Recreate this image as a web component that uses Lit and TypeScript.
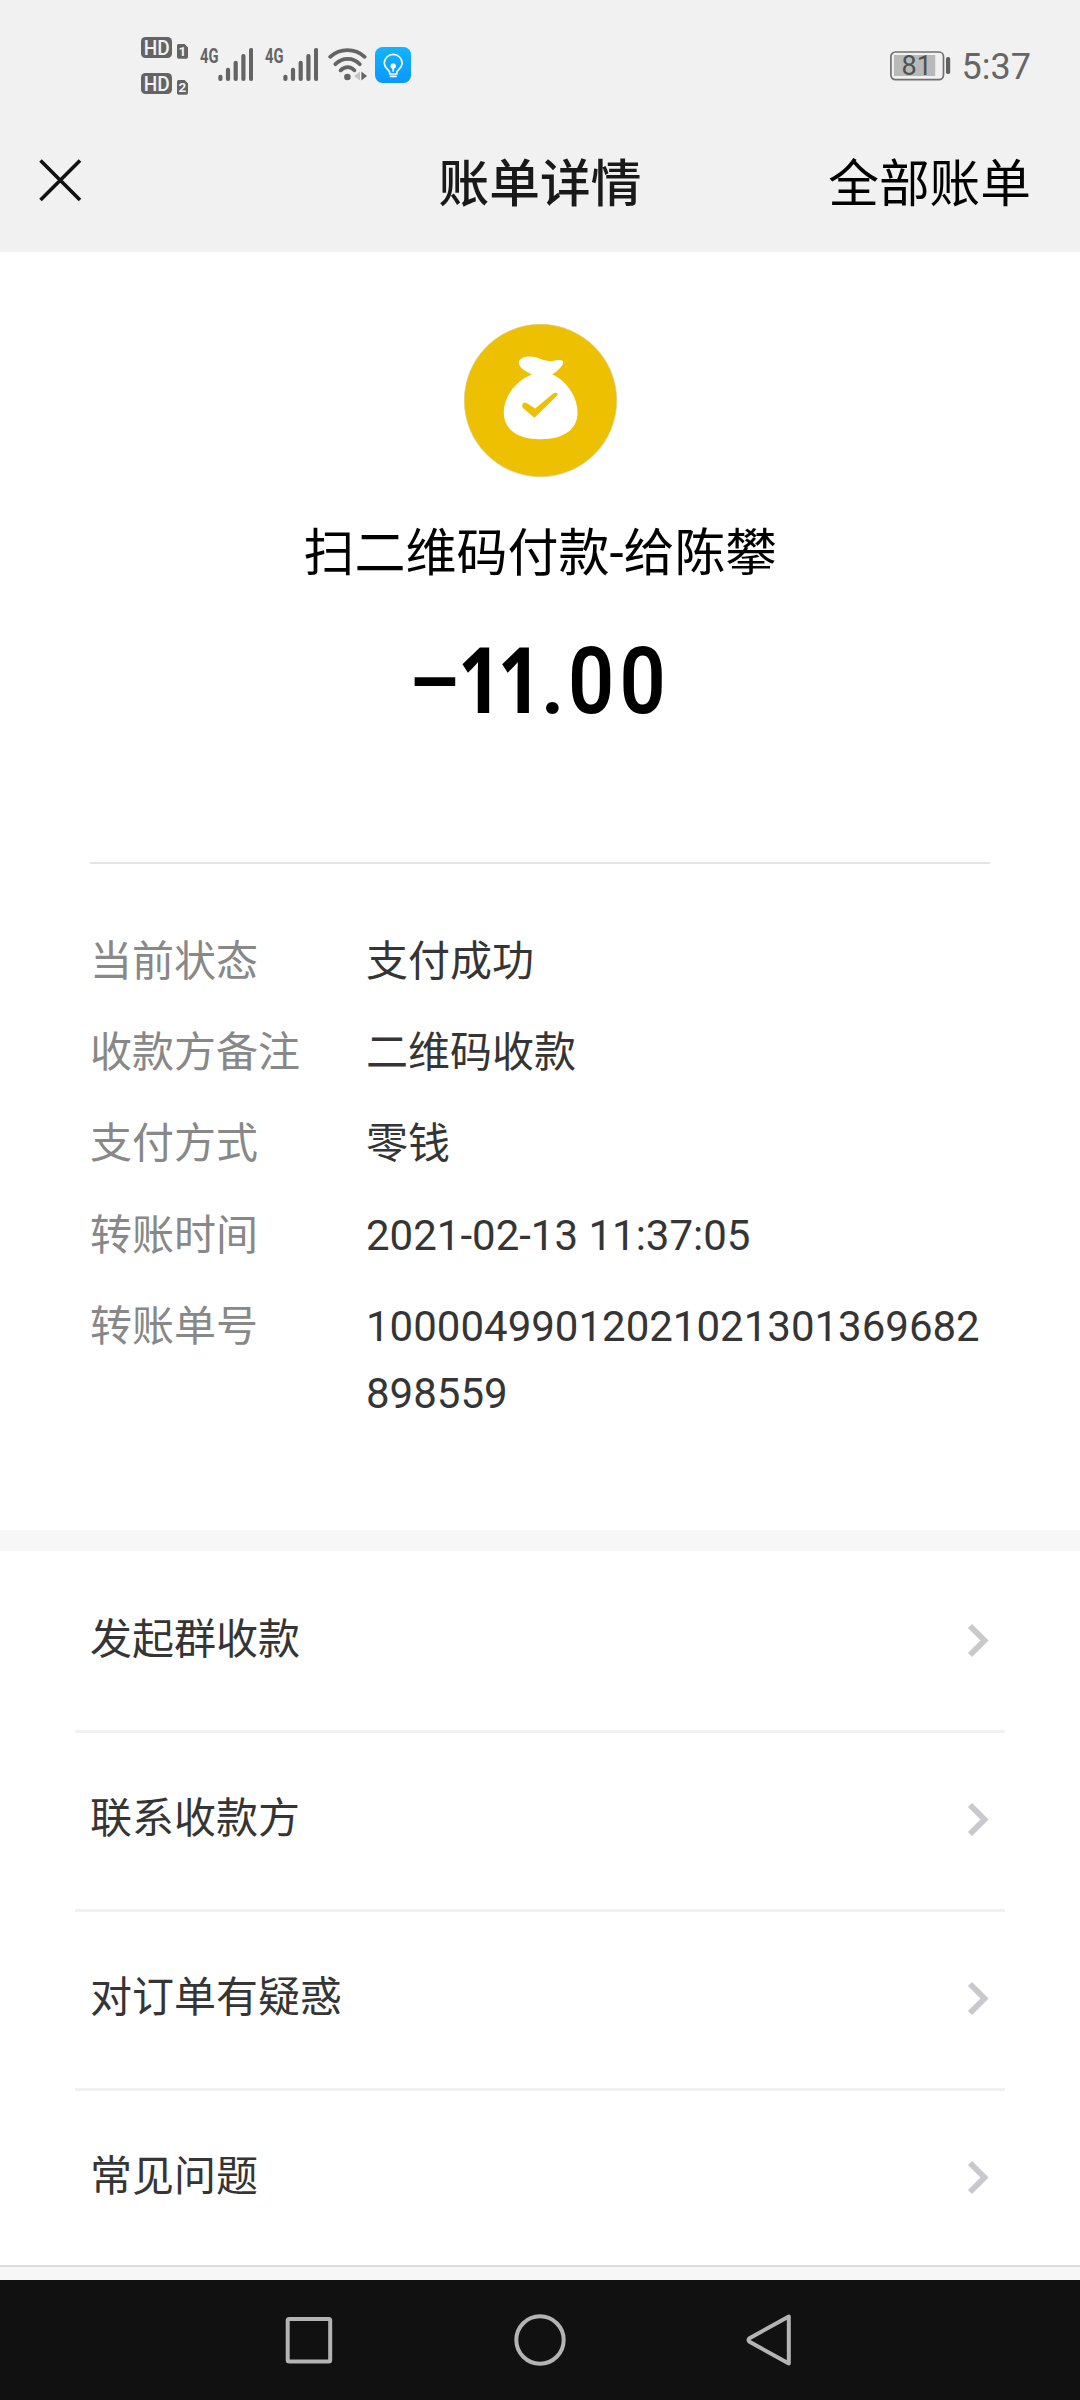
import { LitElement, html, css, svg } from "lit";
import { customElement, property } from "lit/decorators.js";

@customElement("status-bar")
class StatusBar extends LitElement {
  static styles = css`
    :host { display: flex; justify-content: space-between; align-items: flex-start; height: 110px; padding: 36px 49px 0 141px; box-sizing: border-box; }
    .left, .right { display: flex; align-items: flex-start; }
    .sims { display: flex; flex-direction: column; gap: 14px; margin-top: 1px; }
    svg { display: block; }
    text { font-family: Roboto, sans-serif; }
    .signal { margin-left: 12px; }
    .wifi { margin-left: 10px; }
    .bulb { margin-left: 7px; margin-top: 11px; }
    .battery { margin-top: 15px; }
    .time { margin-left: 11px; margin-top: 10px; font: 400 36px/42px Roboto, sans-serif; color: #666; }
  `;

  private sim(n: number) {
    return html`<svg width="47" height="22" viewBox="0 0 47 22">
      <rect x="0" y="0" width="31" height="21" rx="4.5" fill="#646464" />
      <text x="15.7" y="18" font-size="20.5" font-weight="500" text-anchor="middle" textLength="26" lengthAdjust="spacingAndGlyphs" fill="#f2f2f2">HD</text>
      <path d="M38 7h5.6l3.4 3.6V20a1.7 1.7 0 0 1-1.7 1.7h-7.6A1.7 1.7 0 0 1 36 20V8.7A1.7 1.7 0 0 1 38 7z" fill="#646464" />
      <text x="41.4" y="19.3" font-size="13.5" font-weight="700" text-anchor="middle" fill="#f2f2f2">${n}</text>
    </svg>`;
  }

  private signal() {
    const bars = [[18.3, 38.7], [25.9, 31.7], [33.6, 24.7], [41.3, 18], [49, 12]];
    return html`<svg class="signal" width="53" height="47" viewBox="0 0 53 47">
      <text x="0" y="27" font-size="21" font-weight="700" textLength="18.5" lengthAdjust="spacingAndGlyphs" fill="#646464">4G</text>
      ${bars.map(([x, y]) => svg`<rect x=${x} y=${y} width="4.2" height=${45 - y} rx="2" fill="#646464" />`)}
    </svg>`;
  }

  render() {
    return html`
      <div class="left">
        <div class="sims">${this.sim(1)}${this.sim(2)}</div>
        ${this.signal()}${this.signal()}
        <svg class="wifi" width="40" height="47" viewBox="0 0 40 47">
          <g fill="none" stroke="#646464" stroke-width="3.8" stroke-linecap="round">
            <path d="M2.2 20.800C12 11.800 27 11.800 36.600 20.800" />
            <path d="M7.4 28.200C14.500 21 25 21 31.800 28.200" />
            <path d="M12.6 34.300C17 30 22.500 30 26.400 34.300" />
          </g>
          <circle cx="19.4" cy="41" r="3.3" fill="#646464" />
          <path d="M32 35.500v9L26 40z" fill="#c4c4c4" />
          <path d="M33.400 35.500v9L39 40z" fill="#646464" />
        </svg>
        <svg class="bulb" width="36" height="36" viewBox="0 0 36 36">
          <defs><linearGradient id="sky" x1="0" y1="0" x2="0" y2="1"><stop offset="0" stop-color="#12b4ff" /><stop offset="1" stop-color="#0a98ff" /></linearGradient></defs>
          <rect width="36" height="36" rx="7.5" fill="url(#sky)" />
          <g fill="none" stroke="#fff" stroke-width="1.7" stroke-linejoin="round" stroke-linecap="round">
            <path d="M14.700 27V25.500C14.700 22.500 9.300 21.600 9.300 16.300a8.900 8.900 0 0 1 17.800 0C27.100 21.600 21.800 22.500 21.800 25.500V27z" />
            <path d="M18.200 18v6" /><path d="M15.500 29.300h5.500" />
          </g>
          <rect x="15.6" y="16.6" width="5.2" height="4.8" rx="1.6" fill="#fff" />
        </svg>
      </div>
      <div class="right">
        <svg class="battery" width="61" height="30" viewBox="0 0 61 30">
          <rect x=".9" y="1" width="52.6" height="27.6" rx="4.5" fill="none" stroke="#707070" stroke-width="1.7" />
          <rect x="3.9" y="4" width="41.3" height="21" fill="#b9b9b9" />
          <text x="26.7" y="24.3" font-size="27" text-anchor="middle" fill="#505050">81</text>
          <rect x="56" y="6" width="4.2" height="17" rx="1.8" fill="#606060" />
        </svg>
        <div class="time">5:37</div>
      </div>`;
  }
}

@customElement("title-bar")
class TitleBar extends LitElement {
  static styles = css`
    :host { display: grid; grid-template-columns: 1fr auto 1fr; align-items: center; height: 142px; padding: 0 49px 2px 39px; box-sizing: border-box; color: #000; }
    svg { display: block; }
    .title, .all { font: 400 50.7px/74px "Noto Sans CJK SC", sans-serif; margin-bottom: 1px; }
    .title { font-weight: 500; color: #191919; margin-left: 10px; }
    .all { justify-self: end; }
  `;
  render() {
    return html`
      <svg width="43" height="43" viewBox="0 0 43 43"><path d="M1.500 1.500L41 41M41 1.500L1.500 41" stroke="#111" stroke-width="3.600" fill="none" /></svg>
      <div class="title">账单详情</div>
      <div class="all">全部账单</div>`;
  }
}

@customElement("bill-summary")
class BillSummary extends LitElement {
  static styles = css`
    :host { display: flex; flex-direction: column; align-items: center; height: 610px; padding-top: 72px; box-sizing: border-box; color: #000; }
    svg { display: block; }
    .payee { margin-top: 39px; font: 400 51px/76px Roboto, "Noto Sans CJK SC", sans-serif; }
    .amount { display: grid; grid-template-columns: 48px 82px 28px 102px; align-items: baseline; height: 106px; margin-top: 33px; font: 500 92px/106px Roboto, sans-serif; }
    .amount span { display: block; white-space: nowrap; transform-origin: 0 50%; }
    .amount .sign { font-weight: 400; width: max-content; justify-self: end; transform-origin: 100% 50%; transform: translateY(-4px) scale(1.85, 1.3); }
    .ones { font-family: "Noto Sans", sans-serif; font-weight: 700; letter-spacing: -4px; transform: scaleX(0.82); }
    .zeros { font-weight: 600; letter-spacing: 6px; transform: scaleX(0.88); }
  `;
  render() {
    return html`
      <svg width="153" height="153" viewBox="72 72 458 458">
        <circle cx="301" cy="301" r="228" fill="#edc101" stroke="#d9c98a" stroke-width="2" />
        <path d="M276 223C255 213 236 202 236 187C238 170 265 166 285 171C308 178 320 187 345 181C360 178 371 181 369 188C366 201 350 214 336 223C375 239 412 286 412 337C412 388 370 417 302 417C230 417 191 386 191 337C191 286 232 238 276 223z" fill="#fff" />
        <path d="M252 308C246 310 244 318 249 324L283 353L350 287C356 279 348 275 340 279L285 325L262 310C258 307 255 307 252 308z" fill="#edc101" />
      </svg>
      <div class="payee">扫二维码付款-给陈攀</div>
      <div class="amount"><span class="sign">-</span><span class="ones">11</span><span class="dot">.</span><span class="zeros">00</span></div>`;
  }
}

@customElement("bill-details")
class BillDetails extends LitElement {
  static styles = css`
    :host { display: block; padding: 64px 90px 0; height: 666px; box-sizing: border-box; }
    .list { display: grid; grid-template-columns: 276px 1fr; row-gap: 24px; margin: 0; font: 400 42px/67.2px Roboto, "Noto Sans CJK SC", sans-serif; }
    dt { color: #888; margin: 0; }
    dd { color: #353535; margin: 0; word-break: break-all; }
  `;
  private rows = [
    ["当前状态", "支付成功"],
    ["收款方备注", "二维码收款"],
    ["支付方式", "零钱"],
    ["转账时间", "2021-02-13 11:37:05"],
    ["转账单号", "10000499012021021301369682898559"],
  ];
  render() {
    return html`<dl class="list">${this.rows.map(([k, v]) => html`<dt>${k}</dt><dd>${v}</dd>`)}</dl>`;
  }
}

@customElement("action-row")
class ActionRow extends LitElement {
  static styles = css`
    :host { display: flex; justify-content: space-between; align-items: center; height: 179px; margin: 0 75px; padding: 0 15px 3px; box-sizing: border-box; border-top: 3px solid #f1f1f1; }
    :host([first]) { border-top-color: transparent; }
    .label { font: 400 42px/62px "Noto Sans CJK SC", sans-serif; color: #353535; margin-bottom: 9px; }
    svg { display: block; }
  `;
  @property() label = "";
  render() {
    return html`<span class="label">${this.label}</span>
      <svg width="23" height="35" viewBox="0 0 23 35"><path d="M3 3L17.500 17.500L3 32" fill="none" stroke="#c8c8cd" stroke-width="5.800" /></svg>`;
  }
}

@customElement("nav-bar")
class NavBar extends LitElement {
  static styles = css`
    :host { display: flex; justify-content: center; align-items: center; gap: 178px; height: 120px; background: #111; }
    svg { display: block; }
    path, rect, circle { fill: none; stroke: #b4b4b4; stroke-width: 4; stroke-linejoin: round; }
  `;
  render() {
    return html`
      <svg width="52" height="54" viewBox="0 0 52 54"><rect x="3.7" y="6" width="42.5" height="42.5" rx="1.5" /></svg>
      <svg width="52" height="54" viewBox="0 0 52 54"><circle cx="26" cy="27" r="23.7" /></svg>
      <svg width="52" height="54" viewBox="0 0 52 54"><path d="M44.800 3.500V50.500L5.500 28.800Q3.500 27 5.500 25.200z" /></svg>`;
  }
}

@customElement("app-root")
class AppRoot extends LitElement {
  static styles = css`
    :host { display: block; width: 1080px; height: 2400px; overflow: hidden; background: #fff; }
    .top { background: #f1f1f1; }
    .rule { height: 2px; margin: 0 90px; background: #e5e5e5; }
    .band { height: 21px; background: #f7f7f7; }
    .actions { height: 714px; overflow: hidden; }
    .foot { height: 15px; background: #f7f7f7; border-top: 2px solid #dcdcdc; box-sizing: border-box; }
  `;
  render() {
    return html`
      <div class="top"><status-bar></status-bar><title-bar></title-bar></div>
      <bill-summary></bill-summary>
      <div class="rule"></div>
      <bill-details></bill-details>
      <div class="band"></div>
      <div class="actions">
        <action-row first label="发起群收款"></action-row>
        <action-row label="联系收款方"></action-row>
        <action-row label="对订单有疑惑"></action-row>
        <action-row label="常见问题"></action-row>
      </div>
      <div class="foot"></div>
      <nav-bar></nav-bar>`;
  }
}
